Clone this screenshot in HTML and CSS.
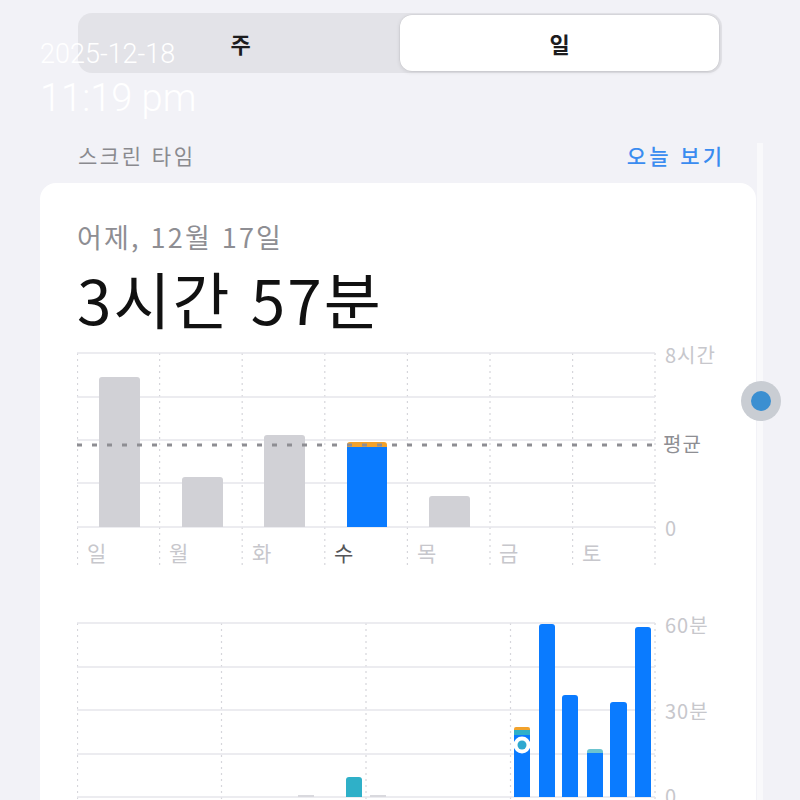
FILE: index.html
```html
<!DOCTYPE html>
<html lang="ko">
<head>
<meta charset="utf-8">
<title>스크린 타임</title>
<link rel="stylesheet" href="styles.css">
</head>
<body>
<div class="page">
  <div class="segmented">
    <div class="seg">주</div>
    <div class="seg seg-active">일</div>
  </div>

  <div class="section-head">
    <span class="section-title">스크린 타임</span>
    <span class="section-link">오늘 보기</span>
  </div>

  <div class="card">
    <div class="card-date">어제, 12월 17일</div>
    <div class="card-total">3시간 57분</div>

    <svg class="chart chart-week" width="660" height="245" viewBox="0 0 660 245">
      <g transform="translate(0,20)">
        <g class="vgrid">
          <line x1="0.5" y1="8" x2="0.5" y2="222"/>
          <line x1="82.6" y1="8" x2="82.6" y2="222"/>
          <line x1="165.2" y1="8" x2="165.2" y2="222"/>
          <line x1="247.8" y1="8" x2="247.8" y2="222"/>
          <line x1="330.4" y1="8" x2="330.4" y2="222"/>
          <line x1="413" y1="8" x2="413" y2="222"/>
          <line x1="495.6" y1="8" x2="495.6" y2="222"/>
          <line x1="578" y1="8" x2="578" y2="222"/>
        </g>
        <g class="hgrid">
          <line x1="0" y1="8" x2="578" y2="8"/>
          <line x1="0" y1="52" x2="578" y2="52"/>
          <line x1="0" y1="95" x2="578" y2="95"/>
          <line x1="0" y1="138" x2="578" y2="138"/>
          <line x1="0" y1="182" x2="578" y2="182"/>
        </g>
        <g class="bars-gray">
          <path d="M22 182 V35 Q22 32 25 32 H60 Q63 32 63 35 V182 Z"/>
          <path d="M105 182 V135 Q105 132 108 132 H143 Q146 132 146 135 V182 Z"/>
          <path d="M187 182 V93 Q187 90 190 90 H225 Q228 90 228 93 V182 Z"/>
          <path d="M352 182 V154 Q352 151 355 151 H390 Q393 151 393 154 V182 Z"/>
        </g>
        <path class="bar-orange" d="M270 102 V100 Q270 97 273 97 H307 Q310 97 310 100 V102 Z"/>
        <rect class="bar-blue" x="270" y="102" width="40" height="80"/>
        <line class="avg" x1="0" y1="100" x2="580" y2="100"/>
        <g class="day-labels">
          <text x="10" y="207">일</text>
          <text x="92" y="207">월</text>
          <text x="175" y="207">화</text>
          <text class="day-today" x="257" y="207">수</text>
          <text x="340" y="207">목</text>
          <text x="422" y="207">금</text>
          <text x="505" y="207">토</text>
        </g>
        <g class="axis-labels">
          <text x="588" y="9">8시간</text>
          <text class="axis-avg" x="586" y="98">평균</text>
          <text x="588" y="182">0</text>
        </g>
      </g>
    </svg>

    <svg class="chart chart-day" width="660" height="220" viewBox="0 0 660 220">
      <g transform="translate(0,20)">
        <g class="vgrid">
          <line x1="0.5" y1="8" x2="0.5" y2="200"/>
          <line x1="144.5" y1="8" x2="144.5" y2="200"/>
          <line x1="289" y1="8" x2="289" y2="200"/>
          <line x1="433.5" y1="8" x2="433.5" y2="200"/>
          <line x1="578" y1="8" x2="578" y2="200"/>
        </g>
        <g class="hgrid">
          <line x1="0" y1="8" x2="578" y2="8"/>
          <line x1="0" y1="52" x2="578" y2="52"/>
          <line x1="0" y1="95" x2="578" y2="95"/>
          <line x1="0" y1="139" x2="578" y2="139"/>
          <line x1="0" y1="182" x2="578" y2="182"/>
        </g>
        <rect class="bar-tiny" x="221" y="180" width="16" height="2"/>
        <rect class="bar-tiny" x="293" y="180" width="16" height="2"/>
        <path class="bar-teal" d="M269 182 V165 Q269 162 272 162 H282 Q285 162 285 165 V182 Z"/>

        <path class="bar-orange" d="M437 115 V114 Q437 112 439 112 H451 Q453 112 453 114 V115 Z"/>
        <rect class="bar-teal" x="437" y="115" width="16" height="5"/>
        <rect class="bar-blue" x="437" y="120" width="16" height="62"/>
        <path class="bar-blue" d="M462 182 V12 Q462 9 465 9 H475 Q478 9 478 12 V182 Z"/>
        <path class="bar-blue" d="M485 182 V83 Q485 80 488 80 H498 Q501 80 501 83 V182 Z"/>
        <path class="bar-teal-cap" d="M510 138 V137 Q510 134 513 134 H523 Q526 134 526 137 V138 Z"/>
        <rect class="bar-blue" x="510" y="138" width="16" height="44"/>
        <path class="bar-blue" d="M533 182 V90 Q533 87 536 87 H547 Q550 87 550 90 V182 Z"/>
        <path class="bar-blue" d="M558 182 V15 Q558 12 561 12 H571 Q574 12 574 15 V182 Z"/>

        <circle class="mark-ring" cx="445" cy="130" r="8.5"/>
        <circle class="mark-dot" cx="445" cy="130" r="4.5"/>

        <g class="axis-labels">
          <text x="588" y="9">60분</text>
          <text x="588" y="95">30분</text>
          <text x="588" y="180">0</text>
        </g>
      </g>
    </svg>
  </div>

  <div class="stamp">
    <div class="stamp-date">2025-12-18</div>
    <div class="stamp-time">11:19 pm</div>
  </div>
  <div class="scroll-strip"></div>
  <div class="float-dot"><div class="float-dot-inner"></div></div>
</div>
</body>
</html>
```

FILE: styles.css
```css
html, body {
  margin: 0;
  padding: 0;
  background: #f2f2f7;
}

body {
  font-family: "Noto Sans CJK KR", "Noto Sans", sans-serif;
  overflow: hidden;
  height: 800px;
}

.page {
  position: relative;
  width: 800px;
  height: 800px;
  overflow: hidden;
  padding-top: 13px;
  box-sizing: border-box;
}

.segmented {
  margin: 0 78px;
  height: 60px;
  box-sizing: border-box;
  background: #e3e3e8;
  border-radius: 14px;
  padding: 2px 3px;
  display: flex;
}

.seg {
  flex: 1;
  display: flex;
  align-items: center;
  justify-content: center;
  font-size: 22px;
  font-weight: 700;
  color: #1c1c1e;
}

.seg-active {
  background: #ffffff;
  border-radius: 12px;
  box-shadow: 0 1px 4px rgba(0, 0, 0, 0.12), 0 0 0 0.5px rgba(0, 0, 0, 0.06);
}

.section-head {
  margin: 68px 78px 0 78px;
  height: 28px;
  display: flex;
  justify-content: space-between;
  align-items: center;
}

.section-title {
  font-size: 21px;
  color: #8a8a8f;
  line-height: 28px;
  letter-spacing: 2.5px;
}

.section-link {
  font-size: 21px;
  font-weight: 500;
  color: #3a8cf0;
  line-height: 28px;
  letter-spacing: 3px;
  margin-right: -3px;
}

.card {
  margin: 14px 0 0 40px;
  width: 716px;
  height: 700px;
  background: #ffffff;
  border-radius: 16px;
  padding: 38px 0 0 37px;
  box-sizing: border-box;
}

.card-date {
  font-size: 27px;
  line-height: 32px;
  color: #8e8e93;
  height: 32px;
  letter-spacing: 2.2px;
}

.card-total {
  margin-top: 9px;
  font-size: 62px;
  line-height: 72px;
  color: #111111;
  height: 72px;
  letter-spacing: 2px;
}

.chart {
  display: block;
}

.chart-week {
  margin-top: -9px;
}

.chart-day {
  margin-top: 25px;
}

.vgrid line {
  stroke: #d6d6db;
  stroke-width: 1.2;
  stroke-dasharray: 2 4;
}

.hgrid line {
  stroke: #e6e6eb;
  stroke-width: 1.6;
}

.bars-gray path {
  fill: #d1d1d6;
}

.bar-blue {
  fill: #0a7bff;
}

.bar-orange {
  fill: #f2a22c;
}

.bar-teal {
  fill: #2fb0c8;
}

.bar-teal-cap {
  fill: #6cc4cf;
}

.bar-tiny {
  fill: #d9d9de;
}

.avg {
  stroke: #8e8e93;
  stroke-width: 3;
  stroke-dasharray: 5 10;
}

.day-labels text {
  font-size: 21px;
  fill: #c7c7cc;
  dominant-baseline: central;
}

.day-labels .day-today {
  fill: #555558;
}

.axis-labels text {
  font-size: 20px;
  fill: #c7c7cc;
  dominant-baseline: central;
  letter-spacing: 1px;
}

.axis-labels .axis-avg {
  fill: #8e8e93;
}

.mark-ring {
  fill: #ffffff;
}

.mark-dot {
  fill: #2ea8d0;
}

.stamp {
  position: absolute;
  left: 40px;
  top: 38px;
  color: #ffffff;
  font-family: Roboto, "Liberation Sans", sans-serif;
  font-weight: 300;
}

.stamp-date {
  font-size: 27px;
  line-height: 32px;
}

.stamp-time {
  font-size: 38px;
  line-height: 46px;
  margin-top: 5px;
}

.scroll-strip {
  position: absolute;
  left: 757px;
  top: 143px;
  width: 6px;
  height: 700px;
  background: #f9f9fb;
}

.float-dot {
  position: absolute;
  left: 741px;
  top: 381px;
  width: 40px;
  height: 40px;
  border-radius: 50%;
  background: #c9cdd3;
  display: flex;
  align-items: center;
  justify-content: center;
}

.float-dot-inner {
  width: 20px;
  height: 20px;
  border-radius: 50%;
  background: #3b8fd1;
}
```
